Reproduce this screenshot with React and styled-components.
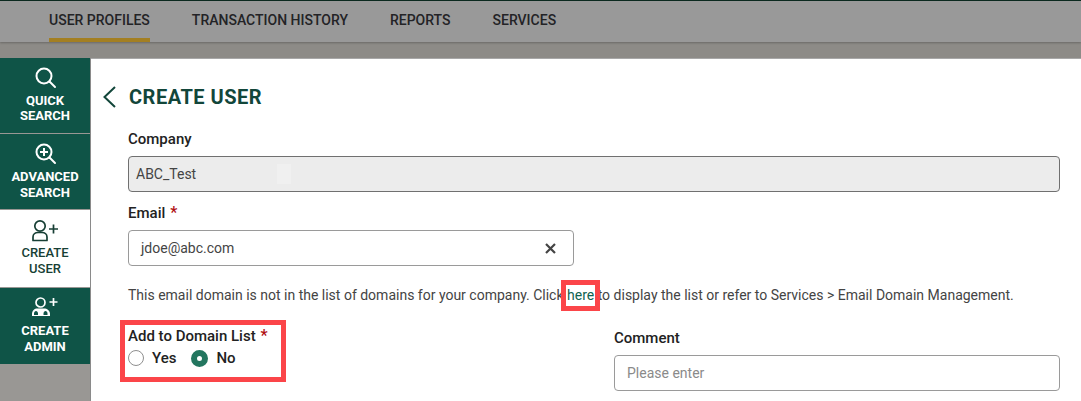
import React from "react";
import styled, { createGlobalStyle } from "styled-components";

const Global = createGlobalStyle`
  html, body { margin: 0; padding: 0; background: #fff; }
  body { font-family: Roboto, "Liberation Sans", sans-serif; color: #1f1f1f; }
  * { box-sizing: border-box; }
`;

const Page = styled.div`
  width: 1081px;
  height: 401px;
  overflow: hidden;
  display: flex;
  flex-direction: column;
`;
const TopBand = styled.header`
  height: 58px;
  flex: none;
  background: #8d8b87;
  border-top: 1px solid #0c2a20;
`;
const Nav = styled.nav`
  height: 41px;
  background: #999999;
  box-shadow: 0 1px 2px rgba(0, 0, 0, 0.25);
  display: flex;
  gap: 42px;
  padding-left: 49px;
`;
const NavItem = styled.a`
  height: 41px;
  padding-top: 11px;
  font-size: 14px;
  line-height: 16px;
  font-weight: 500;
  color: #232326;
  border-bottom: ${(p) => (p.$active ? "4px solid #a37f22" : "none")};
`;
const Body = styled.div`
  flex: 1;
  display: flex;
  min-height: 0;
`;
const Side = styled.aside`
  width: 91px;
  flex: none;
  background: #999794;
  border-right: 1px solid #8a8a8a;
  display: flex;
  flex-direction: column;
`;
const SideItem = styled.a`
  height: ${(p) => p.$h}px;
  flex: none;
  margin-bottom: 1px;
  background: ${(p) => (p.$active ? "#ffffff" : "#0f5447")};
  color: ${(p) => (p.$active ? "#173f35" : "#ffffff")};
  display: flex;
  flex-direction: column;
  align-items: center;
  padding-top: 9px;
  font-size: 13px;
  line-height: ${(p) => p.$lh || 15.5}px;
  font-weight: ${(p) => (p.$active ? 500 : 700)};
  text-align: center;
  svg { display: block; margin: -1px 0 3px; }
`;
const Main = styled.main`
  flex: 1;
  min-width: 0;
  padding: 0 21px 0 11px;
  border-top: 1px solid #a8a8a8;
`;
const TitleRow = styled.div`
  height: 36px;
  margin-top: 20px;
  display: flex;
  align-items: center;
  gap: 12px;
`;
const Title = styled.h1`
  margin: 0;
  font-size: 20px;
  line-height: 36px;
  font-weight: 700;
  color: #12463a;
  letter-spacing: 0.5px;
`;
const Form = styled.div`
  padding-left: 26px;
`;
const Label = styled.label`
  display: block;
  margin-top: ${(p) => p.$mt || 0}px;
  font-size: 15px;
  line-height: 16px;
  font-weight: 500;
  color: #222;
  span { color: #b00d12; margin-left: 1px; font-size: 16px; }
`;
const Input = styled.div`
  height: 36px;
  width: ${(p) => p.$w};
  margin-top: ${(p) => p.$mt}px;
  border: 1px solid ${(p) => (p.$dis ? "#707070" : "#9a9a9a")};
  border-radius: 4px;
  background: ${(p) => (p.$dis ? "#ececec" : "#fff")};
  color: ${(p) => p.$color || "#444"};
  font-size: 14px;
  display: flex;
  align-items: center;
  justify-content: space-between;
  padding: 0 17px 0 ${(p) => p.$pl || 12}px;
`;
const Smudge = styled.span`
  width: 14px;
  height: 20px;
  margin: 0 auto 0 81px;
  background: #f0f0f0;
`;
const Hint = styled.p`
  margin: 21px 0 0;
  font-size: 14px;
  line-height: 16px;
  color: #444;
  white-space: nowrap;
`;
const Here = styled.a`
  position: relative;
  color: #0f6350;
  &::after {
    content: "";
    position: absolute;
    left: -6px;
    right: -6px;
    top: -7px;
    bottom: -8px;
    border: 5px solid #fb4549;
  }
`;
const Columns = styled.div`
  display: flex;
  margin-top: 23px;
`;
const DomainCol = styled.div`
  width: 486px;
  flex: none;
  position: relative;
  padding-top: 2px;
`;
const Highlight = styled.div`
  position: absolute;
  left: -8px;
  top: -6px;
  width: 166px;
  height: 62px;
  border: 5px solid #fb4549;
`;
const Radios = styled.div`
  display: flex;
  align-items: center;
  margin-top: 5px;
  font-size: 15px;
  font-weight: 500;
  color: #222;
`;
const Radio = styled.span`
  width: ${(p) => (p.$on ? 17 : 16)}px;
  height: ${(p) => (p.$on ? 17 : 16)}px;
  border-radius: 50%;
  flex: none;
  background: #fff;
  border: ${(p) => (p.$on ? "6px solid #23765f" : "1px solid #8f8f8f")};
  margin-right: 8px;
`;
const RadioText = styled.span`
  margin-right: 15px;
`;
const CommentCol = styled.div`
  flex: 1;
  padding-top: 4px;
`;

export default function App() {
  return (
    <Page>
      <Global />
      <TopBand>
        <Nav>
          <NavItem $active>USER PROFILES</NavItem>
          <NavItem>TRANSACTION HISTORY</NavItem>
          <NavItem>REPORTS</NavItem>
          <NavItem>SERVICES</NavItem>
        </Nav>
      </TopBand>
      <Body>
        <Side>
          <SideItem $h={75} $lh={15}>
            <svg width="24" height="24" viewBox="0 0 24 24" fill="none" stroke="currentColor" strokeWidth="2">
              <circle cx="11" cy="10" r="7.500" />
              <path d="M16.500 15.500 22 21" strokeLinecap="round" />
            </svg>
            QUICK<br />SEARCH
          </SideItem>
          <SideItem $h={75}>
            <svg width="24" height="24" viewBox="0 0 24 24" fill="none" stroke="currentColor" strokeWidth="2">
              <circle cx="11" cy="10" r="7.500" />
              <path d="M16.500 15.500 22 21" strokeLinecap="round" />
              <path d="M11 6v8M7 10h8" />
            </svg>
            ADVANCED<br />SEARCH
          </SideItem>
          <SideItem $active $h={77}>
            <svg width="28" height="24" viewBox="0 0 28 24" fill="none" stroke="currentColor" strokeWidth="1.700">
              <circle cx="9" cy="8" r="5.200" />
              <path d="M2 22.500v-3.500c0-3 2.500-4.500 5-4.500h4c2.500 0 5 1.500 5 4.500v3.500z" strokeLinejoin="round" />
              <path d="M18 11h9M22.500 6.500v9" />
            </svg>
            CREATE<br />USER
          </SideItem>
          <SideItem $h={76}>
            <svg width="28" height="24" viewBox="0 0 28 24" fill="none" stroke="currentColor" strokeWidth="1.700">
              <circle cx="9.500" cy="6.500" r="4.500" />
              <path d="M1 20v-2c0-3.500 2.500-5.500 5.500-5.500h6.500c3 0 6 2 6 5.500v2z" fill="currentColor" stroke="none" />
              <path d="M3 19v-1.500c0-1.500 1-2.500 2-2.500s2 1 2 2.500V19zM12.500 19v-1.500c0-1.500 1-2.500 2-2.500s2 1 2 2.500V19z" fill="#0f5447" stroke="none" />
              <path d="M18.500 6h8M22.500 2v8" />
            </svg>
            CREATE<br />ADMIN
          </SideItem>
        </Side>
        <Main>
          <TitleRow>
            <svg width="15" height="22" viewBox="0 0 15 22" fill="none" stroke="#12463a" strokeWidth="2">
              <path d="M13 1 2.500 11 13 21" />
            </svg>
            <Title>CREATE USER</Title>
          </TitleRow>
          <Form>
            <Label $mt={16}>Company</Label>
            <Input $dis $w="932px" $mt={9} $pl={7}>ABC_Test<Smudge /></Input>
            <Label $mt={13}>Email<span> *</span></Label>
            <Input $w="446px" $mt={9}>
              jdoe@abc.com
              <svg width="11" height="11" viewBox="0 0 11 11" stroke="#444" strokeWidth="2.200">
                <path d="M1 1l9 9M10 1l-9 9" />
              </svg>
            </Input>
            <Hint>
              This email domain is not in the list of domains for your company. Click <Here>here</Here> to display the list or refer to Services &gt; Email Domain Management.
            </Hint>
            <Columns>
              <DomainCol>
                <Highlight />
                <Label>Add to Domain List<span> *</span></Label>
                <Radios>
                  <Radio />
                  <RadioText>Yes</RadioText>
                  <Radio $on />
                  <RadioText>No</RadioText>
                </Radios>
              </DomainCol>
              <CommentCol>
                <Label>Comment</Label>
                <Input $w="446px" $mt={9} $color="#8a8a8a">Please enter</Input>
              </CommentCol>
            </Columns>
          </Form>
        </Main>
      </Body>
    </Page>
  );
}
